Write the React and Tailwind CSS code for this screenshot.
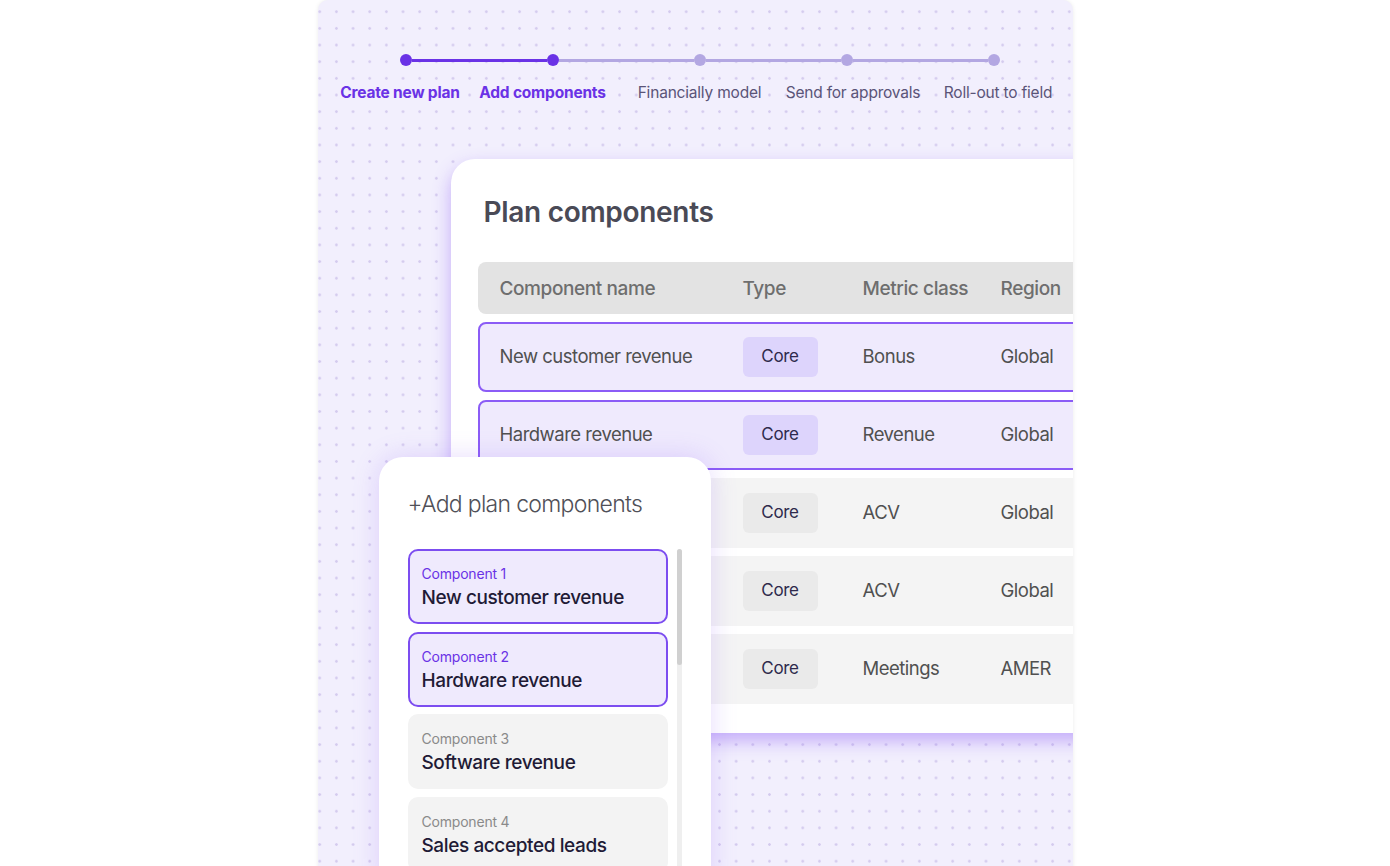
import React from "react";

const steps = [
  { label: "Create new plan", active: true, shift: "mr-[11px]" },
  { label: "Add components", active: true, shift: "mr-[20px]" },
  { label: "Financially model", active: false, shift: "" },
  { label: "Send for approvals", active: false, shift: "ml-[13px]" },
  { label: "Roll-out to field", active: false, shift: "ml-[9px]" },
];

const rows = [
  { name: "New customer revenue", metric: "Bonus", region: "Global", sel: true },
  { name: "Hardware revenue", metric: "Revenue", region: "Global", sel: true },
  { name: "", metric: "ACV", region: "Global", sel: false },
  { name: "", metric: "ACV", region: "Global", sel: false },
  { name: "", metric: "Meetings", region: "AMER", sel: false },
];

const items = [
  { n: 1, title: "New customer revenue", sel: true },
  { n: 2, title: "Hardware revenue", sel: true },
  { n: 3, title: "Software revenue", sel: false },
  { n: 4, title: "Sales accepted leads", sel: false },
];

function Stepper() {
  return (
    <div className="flex pt-[54px] pl-[14.5px]">
      {steps.map((s, i) => {
        const leftDark = i === 1;
        const rightDark = i === 0;
        return (
          <div key={s.label} className="w-[147px] flex flex-col items-center">
            <div className="flex items-center w-full h-3">
              <div
                className={
                  i === 0
                    ? "flex-1 h-[3px] bg-transparent"
                    : leftDark
                    ? "flex-1 h-[3px] bg-[#6a32e6]"
                    : "flex-1 h-[3px] bg-[#b3a7e2]"
                }
              />
              <div
                className={
                  s.active
                    ? "w-3 h-3 rounded-full bg-[#6a32e6] shrink-0"
                    : "w-3 h-3 rounded-full bg-[#b3a7e2] shrink-0"
                }
              />
              <div
                className={
                  i === steps.length - 1
                    ? "flex-1 h-[3px] bg-transparent"
                    : rightDark
                    ? "flex-1 h-[3px] bg-[#6a32e6]"
                    : "flex-1 h-[3px] bg-[#b3a7e2]"
                }
              />
            </div>
            <div
              className={
                (s.active
                  ? "mt-[17px] leading-5 text-[15.5px] font-bold text-[#6a32e6] whitespace-nowrap tracking-[-0.2px] "
                  : "mt-[17px] leading-5 text-[15.5px] font-normal text-[#5a5478] whitespace-nowrap tracking-[-0.2px] ") +
                s.shift
              }
            >
              {s.label}
            </div>
          </div>
        );
      })}
    </div>
  );
}

function MainCard() {
  return (
    <div className="mt-[56px] ml-[133px] w-[720px] h-[574px] shrink-0 bg-white rounded-[24px] shadow-[0_8px_18px_rgba(139,92,246,0.45)] pt-[35px]">
      <div className="pl-[33px] text-[28px] leading-[36px] font-semibold text-[#4a4a56] tracking-[-0.3px]">
        Plan components
      </div>
      <div className="mt-[32px] ml-[27px]">
        <div className="h-[52px] rounded-[8px] bg-[#e3e3e3] flex items-center pl-[22px] text-[19px] text-[#6e6e6e] font-medium tracking-[-0.4px] pt-[2px]">
          <div className="w-[243px]">Component name</div>
          <div className="w-[120px]">Type</div>
          <div className="w-[138px]">Metric class</div>
          <div>Region</div>
        </div>
        <div className="mt-2 flex flex-col gap-2">
          {rows.map((r, i) => (
            <div
              key={i}
              className={
                r.sel
                  ? "h-[70px] rounded-[8px] border-2 border-[#8b5cf6] bg-[#efeafd] flex items-center pl-[20px] text-[18.5px] text-[#505050] tracking-[-0.5px]"
                  : "h-[70px] rounded-[8px] border-2 border-transparent bg-[#f4f4f4] flex items-center pl-[20px] text-[18.5px] text-[#505050] tracking-[-0.5px]"
              }
            >
              <div className="w-[243px] whitespace-nowrap">{r.name}</div>
              <div className="w-[120px]">
                <div
                  className={
                    r.sel
                      ? "w-[75px] h-[40px] rounded-[6px] bg-[#ddd4fc] flex items-center justify-center text-[17px] text-[#2e2a4d] tracking-[-0.3px]"
                      : "w-[75px] h-[40px] rounded-[6px] bg-[#eaeaea] flex items-center justify-center text-[17px] text-[#2e2a4d] tracking-[-0.3px]"
                  }
                >
                  Core
                </div>
              </div>
              <div className="w-[138px]">{r.metric}</div>
              <div>{r.region}</div>
            </div>
          ))}
        </div>
      </div>
    </div>
  );
}

function AddCard() {
  return (
    <div className="absolute left-[61px] top-[457px] w-[332px] h-[440px] bg-white rounded-[24px] shadow-[0_0_26px_rgba(139,92,246,0.22)] pt-[32px] pl-[29px]">
      <div className="text-[23px] leading-[30px] font-light text-[#505058] tracking-[-0.7px]">
        +Add plan components
      </div>
      <div className="mt-[30px] flex gap-[9px]">
        <div className="w-[260px] flex flex-col gap-[7.5px]">
          {items.map((it) => (
            <div
              key={it.n}
              className={
                it.sel
                  ? "h-[75px] rounded-[10px] border-2 border-[#7c4df0] bg-[#efeafd] pl-[12px] pt-[14px]"
                  : "h-[75px] rounded-[10px] border-2 border-transparent bg-[#f3f3f3] pl-[12px] pt-[14px]"
              }
            >
              <div
                className={
                  it.sel
                    ? "text-[14px] leading-[18px] text-[#6a32e6] tracking-[-0.2px]"
                    : "text-[14px] leading-[18px] text-[#8a8a8a] tracking-[-0.2px]"
                }
              >
                Component {it.n}
              </div>
              <div className="mt-[3px] text-[19px] leading-[24px] font-medium text-[#1f1b36] tracking-[-0.4px] whitespace-nowrap">
                {it.title}
              </div>
            </div>
          ))}
        </div>
        <div className="w-[5px] h-[330px] rounded-full bg-[#efefef]">
          <div className="w-[5px] h-[116px] rounded-full bg-[#d0d0d0]" />
        </div>
      </div>
    </div>
  );
}

export default function App() {
  return (
    <div
      className="w-[1390px] h-[866px] bg-white flex justify-center overflow-hidden"
      style={{ fontFamily: "Inter, 'Noto Sans', sans-serif" }}
    >
      <div className="relative w-[755px] h-[900px] shrink-0 overflow-hidden rounded-t-[10px] bg-[#f2effd] bg-[radial-gradient(circle,#d4cbee_1px,transparent_1.6px)] bg-[length:16.67px_16.67px] bg-[position:-6.6px_3.4px] shadow-[0_0_4px_rgba(0,0,0,0.08)]">
        <Stepper />
        <MainCard />
        <AddCard />
      </div>
    </div>
  );
}
